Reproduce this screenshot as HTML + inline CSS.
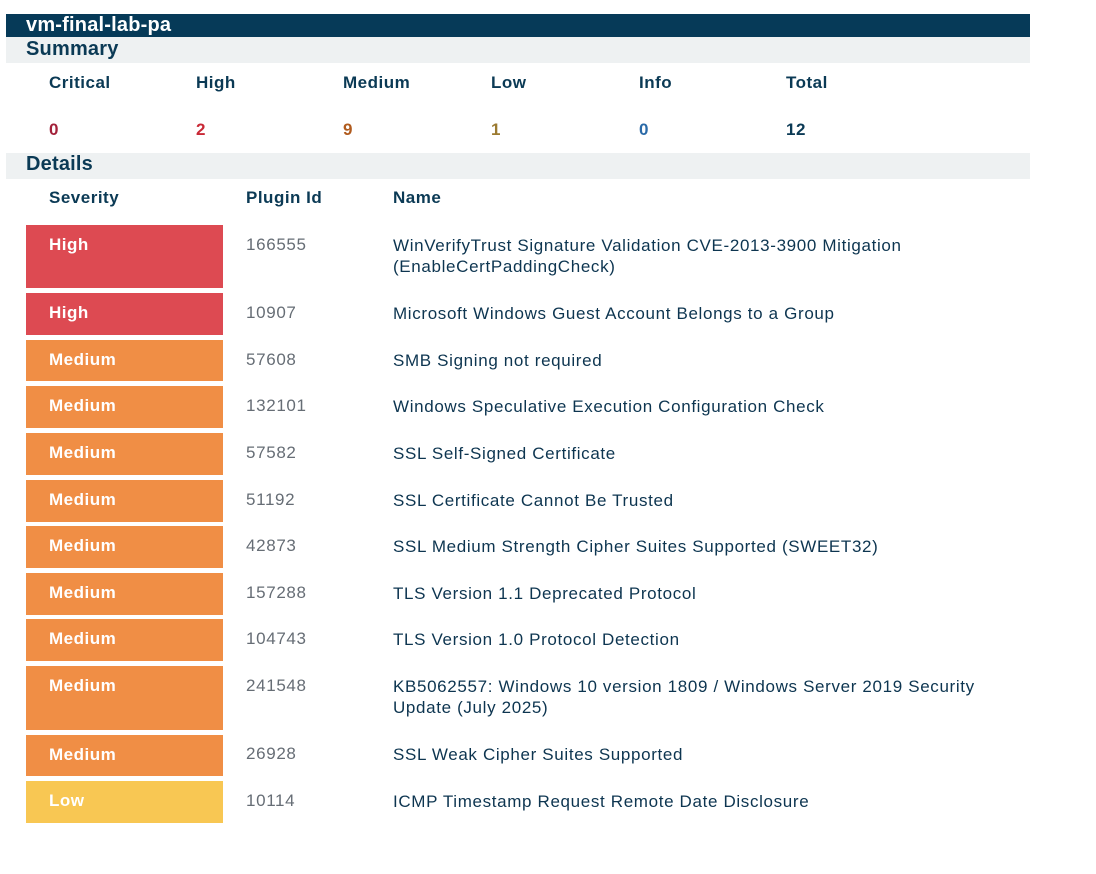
<!DOCTYPE html>
<html><head><meta charset="utf-8"><style>
body{margin:0;width:1096px;height:874px;background:#fff;font-family:"Liberation Sans",Arial,sans-serif;position:relative;overflow:hidden}
.a{position:absolute;white-space:nowrap}
.bar{position:absolute;left:6px;width:1024px}
.h{font-weight:bold;color:#0b3a55;font-size:17px;letter-spacing:0.5px}
.b{position:absolute;left:26px;width:197px;color:#fff;font-weight:bold;font-size:17px;letter-spacing:0.5px;box-sizing:border-box;padding:10px 0 0 23px}
.hi{background:#dd4a52}.me{background:#f08e45}.lo{background:#f8c753}
.id{position:absolute;left:246px;color:#666d75;font-size:17px;letter-spacing:0.65px;padding-top:10px}
.nm{position:absolute;left:393px;color:#0d3550;font-size:17px;letter-spacing:0.65px;padding-top:10px;line-height:21px;white-space:normal;width:620px}
</style></head><body>
<div class="bar" style="top:14px;height:23px;background:#063a58"></div>
<div class="a" style="left:26px;top:14px;color:#fff;font-weight:bold;font-size:20px;line-height:23px;letter-spacing:0.2px">vm-final-lab-pa</div>
<div class="bar" style="top:37px;height:26px;background:#eef1f2"></div>
<div class="a h" style="left:26px;top:38px;font-size:20px;letter-spacing:0.2px">Summary</div>
<div class="a h" style="left:49px;top:73px">Critical</div>
<div class="a h" style="left:196px;top:73px">High</div>
<div class="a h" style="left:343px;top:73px">Medium</div>
<div class="a h" style="left:491px;top:73px">Low</div>
<div class="a h" style="left:639px;top:73px">Info</div>
<div class="a h" style="left:786px;top:73px">Total</div>
<div class="a h" style="left:49px;top:120px;color:#a3213a">0</div>
<div class="a h" style="left:196px;top:120px;color:#c92936">2</div>
<div class="a h" style="left:343px;top:120px;color:#b05b1e">9</div>
<div class="a h" style="left:491px;top:120px;color:#9b7a30">1</div>
<div class="a h" style="left:639px;top:120px;color:#2a6aa8">0</div>
<div class="a h" style="left:786px;top:120px">12</div>
<div class="bar" style="top:153px;height:26px;background:#eef1f2"></div>
<div class="a h" style="left:26px;top:153px;font-size:20px;letter-spacing:0.2px">Details</div>
<div class="a h" style="left:49px;top:188px">Severity</div>
<div class="a h" style="left:246px;top:188px">Plugin Id</div>
<div class="a h" style="left:393px;top:188px">Name</div>

<div class="b hi" style="top:225px;height:63px">High</div><div class="id" style="top:225px">166555</div><div class="nm" style="top:225px">WinVerifyTrust Signature Validation CVE-2013-3900 Mitigation (EnableCertPaddingCheck)</div>
<div class="b hi" style="top:293px;height:42px">High</div><div class="id" style="top:293px">10907</div><div class="nm" style="top:293px">Microsoft Windows Guest Account Belongs to a Group</div>
<div class="b me" style="top:340px;height:41px">Medium</div><div class="id" style="top:340px">57608</div><div class="nm" style="top:340px">SMB Signing not required</div>
<div class="b me" style="top:386px;height:42px">Medium</div><div class="id" style="top:386px">132101</div><div class="nm" style="top:386px">Windows Speculative Execution Configuration Check</div>
<div class="b me" style="top:433px;height:42px">Medium</div><div class="id" style="top:433px">57582</div><div class="nm" style="top:433px">SSL Self-Signed Certificate</div>
<div class="b me" style="top:480px;height:42px">Medium</div><div class="id" style="top:480px">51192</div><div class="nm" style="top:480px">SSL Certificate Cannot Be Trusted</div>
<div class="b me" style="top:526px;height:42px">Medium</div><div class="id" style="top:526px">42873</div><div class="nm" style="top:526px">SSL Medium Strength Cipher Suites Supported (SWEET32)</div>
<div class="b me" style="top:573px;height:42px">Medium</div><div class="id" style="top:573px">157288</div><div class="nm" style="top:573px">TLS Version 1.1 Deprecated Protocol</div>
<div class="b me" style="top:619px;height:42px">Medium</div><div class="id" style="top:619px">104743</div><div class="nm" style="top:619px">TLS Version 1.0 Protocol Detection</div>
<div class="b me" style="top:666px;height:64px">Medium</div><div class="id" style="top:666px">241548</div><div class="nm" style="top:666px">KB5062557: Windows 10 version 1809 / Windows Server 2019 Security<br>Update (July 2025)</div>
<div class="b me" style="top:735px;height:41px">Medium</div><div class="id" style="top:734px">26928</div><div class="nm" style="top:734px">SSL Weak Cipher Suites Supported</div>
<div class="b lo" style="top:781px;height:42px">Low</div><div class="id" style="top:781px">10114</div><div class="nm" style="top:781px">ICMP Timestamp Request Remote Date Disclosure</div>
</body></html>
